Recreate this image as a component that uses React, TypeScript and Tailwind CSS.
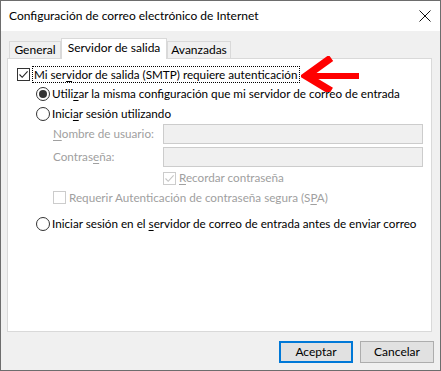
import type { ReactNode } from 'react'

const font = { fontFamily: 'Lato, "Noto Sans", sans-serif' }

function Check({ checked, disabled }: { checked?: boolean; disabled?: boolean }) {
  return (
    <span
      className={`flex h-[13px] w-[13px] shrink-0 items-center justify-center border bg-white ${
        disabled ? 'border-[#cccccc]' : 'border-[#333333]'
      }`}
    >
      {checked && (
        <svg width="11" height="11" viewBox="0 0 11 11">
          <path d="M1.5 5.5 L4.2 8.3 L9.6 2.4" fill="none" stroke={disabled ? '#c4c4c4' : '#222'} strokeWidth="1.1" />
        </svg>
      )}
    </span>
  )
}

function Radio({ selected }: { selected?: boolean }) {
  return (
    <span className="flex h-[14px] w-[14px] shrink-0 items-center justify-center rounded-full border border-[#333333] bg-white">
      {selected && <span className="h-[8px] w-[8px] rounded-full bg-[#333333]" />}
    </span>
  )
}

function U({ children }: { children: ReactNode }) {
  return <span className="underline underline-offset-2">{children}</span>
}

function Tab({ label, active }: { label: string; active?: boolean }) {
  if (active)
    return (
      <div className="relative z-10 -mb-px flex h-[21px] w-[106px] items-center justify-center border border-b-0 border-[#d9d9d9] bg-white pb-[2px] text-[12px]">
        {label}
      </div>
    )
  return (
    <div className="flex h-[17px] items-center justify-center border border-b-0 border-[#d9d9d9] bg-[#f0f0f0] text-[12px]">
      {label}
    </div>
  )
}

export default function App() {
  return (
    <div className="relative h-[371px] w-[441px] border border-[#6d6d6d] bg-[#f0f0f0] text-black" style={font}>
      {/* title bar */}
      <div className="flex h-[30px] items-center justify-between bg-white pl-[8px] pr-[9px] text-[12px]">
        <span>Configuración de correo electrónico de Internet</span>
        <svg width="12" height="12" viewBox="0 0 12 12">
          <path d="M0.5 0.5 L11.5 11.5 M11.5 0.5 L0.5 11.5" stroke="#111" strokeWidth="1" />
        </svg>
      </div>

      <div className="pl-[6px] pt-[7px]">
        <div className="flex items-end pl-[2px]">
          <div className="w-[52px]">
            <Tab label="General" />
          </div>
          <Tab label="Servidor de salida" active />
          <div className="w-[64px]">
            <Tab label="Avanzadas" />
          </div>
        </div>

        <div className="h-[274px] w-[425px] border border-[#d9d9d9] bg-white pl-[9px] pt-[5px] text-[11.7px]">
          <div className="flex h-[20px] items-center">
            <Check checked />
            <span className="ml-[2px] border border-dotted border-black px-[1px] leading-[15px]">
              Mi ser<U>v</U>idor de salida (SMTP) requiere autenticación
            </span>
          </div>

          <div className="pl-[19px]">
            <div className="flex h-[20px] items-center gap-[2px]">
              <Radio selected />
              <span>
                Utili<U>z</U>ar la misma configuración que mi servidor de correo de entrada
              </span>
            </div>
            <div className="flex h-[19px] items-center gap-[2px]">
              <Radio />
              <span>
                Inici<U>a</U>r sesión utilizando
              </span>
            </div>

            <div className="pl-[17px] text-[#a0a0a0]">
              <div className="mt-[1px] flex h-[20px] items-center">
                <span className="w-[110px]">
                  <U>N</U>ombre de usuario:
                </span>
                <div className="h-[20px] w-[260px] border border-[#cccccc] bg-[#f0f0f0]" />
              </div>
              <div className="mt-[3px] flex h-[20px] items-center">
                <span className="w-[110px]">
                  Contras<U>e</U>ña:
                </span>
                <div className="h-[20px] w-[260px] border border-[#cccccc] bg-[#f0f0f0]" />
              </div>
              <div className="mt-[1px] flex h-[20px] items-center gap-[3px] pl-[110px]">
                <Check checked disabled />
                <span>
                  <U>R</U>ecordar contraseña
                </span>
              </div>
              <div className="flex h-[19px] items-center gap-[3px]">
                <Check disabled />
                <span>
                  Requerir Autenticación de contraseña segura (S<U>P</U>A)
                </span>
              </div>
            </div>

            <div className="mt-[7px] flex h-[20px] items-center gap-[2px]">
              <Radio />
              <span>
                Iniciar sesión en el <U>s</U>ervidor de correo de entrada antes de enviar correo
              </span>
            </div>
          </div>
        </div>
      </div>

      <div className="mt-[9px] flex justify-end gap-[7px] pr-[6px] text-[12px]">
        <button className="h-[22px] w-[74px] border-2 border-[#0078d7] bg-[#e1e1e1]">Aceptar</button>
        <button className="h-[22px] w-[74px] border border-[#adadad] bg-[#e1e1e1]">Cancelar</button>
      </div>

      {/* annotation arrow */}
      <svg className="absolute left-[300px] top-[55px]" width="62" height="36" viewBox="0 0 62 36">
        <path d="M5 20 L58 20" stroke="#ff0000" strokeWidth="6" />
        <path d="M30 2 L5 20 L30 35" fill="none" stroke="#ff0000" strokeWidth="7.5" />
      </svg>
    </div>
  )
}
